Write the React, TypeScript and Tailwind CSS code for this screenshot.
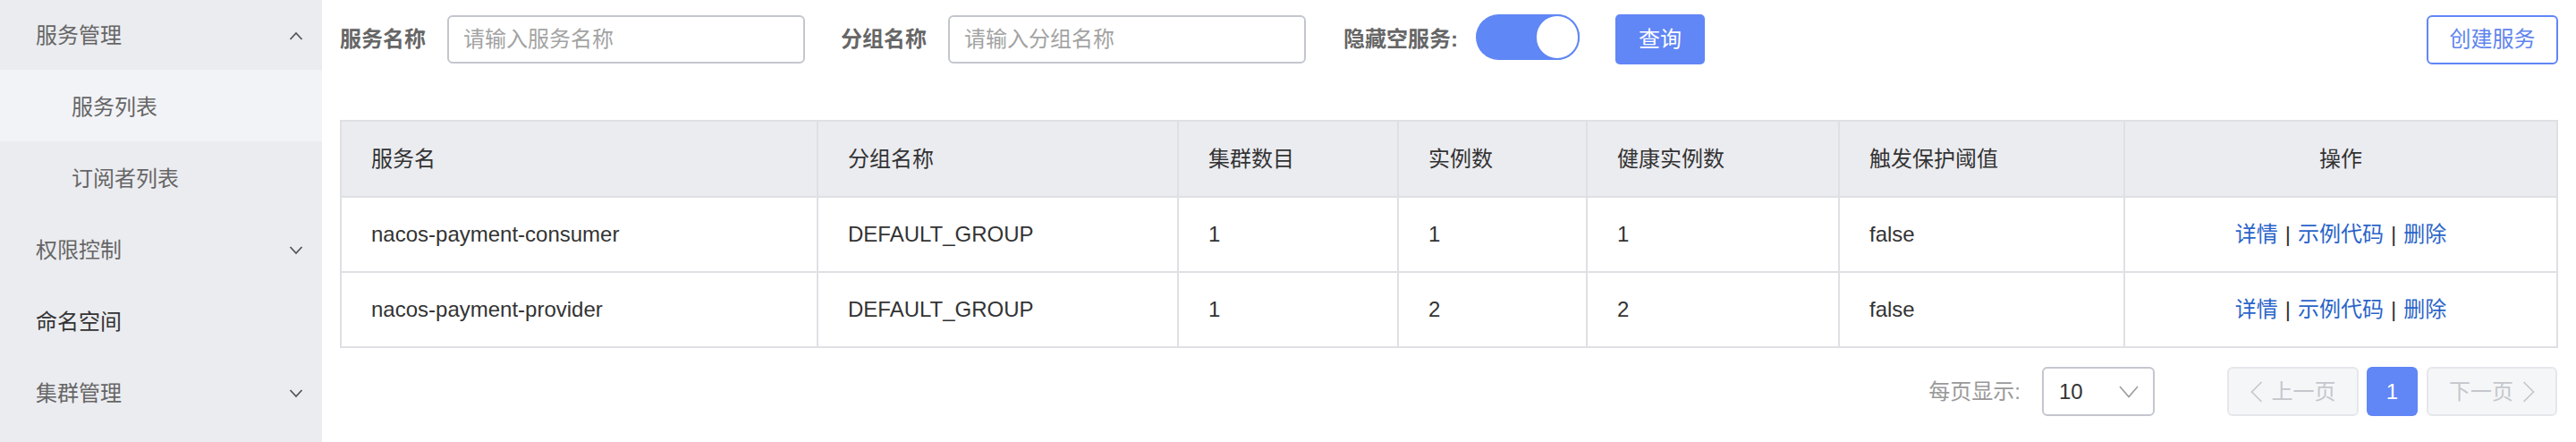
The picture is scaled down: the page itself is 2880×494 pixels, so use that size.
import React from 'react';

const font = { fontFamily: '"Liberation Sans", "Noto Sans CJK SC", sans-serif' };

const menu = [
  { title: '服务管理', level: 0, arrow: 'up' },
  { title: '服务列表', level: 1, active: true },
  { title: '订阅者列表', level: 1 },
  { title: '权限控制', level: 0, arrow: 'down' },
  { title: '命名空间', level: 0, dark: true },
  { title: '集群管理', level: 0, arrow: 'down' },
];

const rows = [
  { name: 'nacos-payment-consumer', group: 'DEFAULT_GROUP', clusters: 1, instances: 1, healthy: 1, threshold: 'false' },
  { name: 'nacos-payment-provider', group: 'DEFAULT_GROUP', clusters: 1, instances: 2, healthy: 2, threshold: 'false' },
];

const cols = ['服务名', '分组名称', '集群数目', '实例数', '健康实例数', '触发保护阈值'];
const colWidths = [533, 403, 246, 211, 282, 319];

function Chevron({ dir }: { dir: 'up' | 'down' }) {
  return (
    <svg width="16" height="10" viewBox="0 0 16 10" fill="none">
      <path
        d={dir === 'up' ? 'M1.5 9 L8 2 L14.5 9' : 'M1.5 1 L8 8 L14.5 1'}
        stroke="#555"
        strokeWidth="1.8"
      />
    </svg>
  );
}

export default function App() {
  return (
    <div className="flex w-[2880px] h-[494px] bg-white overflow-hidden" style={font}>
      {/* Sidebar */}
      <div className="w-[360px] shrink-0 bg-[#ebecf0]">
        {menu.map((item, i) => (
          <div
            key={i}
            className={`flex items-center justify-between pr-[20px] text-[24px] ${
              i === 0 ? 'h-[78px] pt-[2px]' : 'h-[80px] pt-[4px]'
            } ${item.level === 1 ? 'pl-[80px]' : 'pl-[40px]'} ${
              item.active ? 'bg-[#f2f3f7]' : ''
            } ${item.dark ? 'text-[#333]' : 'text-[#666]'}`}
          >
            <span>{item.title}</span>
            {item.arrow && (
              <span className="mr-[1px] flex items-center">
                <Chevron dir={item.arrow as 'up' | 'down'} />
              </span>
            )}
          </div>
        ))}
      </div>

      {/* Main */}
      <div className="flex-1 px-[20px] pt-[16px]">
        {/* Filters */}
        <div className="flex items-center h-[56px]">
          <label className="w-[96px] text-[24px] font-bold text-[#666]">服务名称</label>
          <div className="ml-[24px] w-[400px] h-[54px] border-2 border-[#c4c6cf] rounded-[6px] flex items-center pl-[16px] text-[24px] text-[#a3a3a3]">
            请输入服务名称
          </div>
          <label className="ml-[40px] w-[96px] text-[24px] font-bold text-[#666]">分组名称</label>
          <div className="ml-[24px] w-[400px] h-[54px] border-2 border-[#c4c6cf] rounded-[6px] flex items-center pl-[16px] text-[24px] text-[#a3a3a3]">
            请输入分组名称
          </div>
          <label className="ml-[42px] w-[126px] text-[24px] font-bold text-[#666] whitespace-nowrap">隐藏空服务:</label>
          <div className="ml-[22px] self-start w-[116px] h-[51px] rounded-full bg-[#5f87f5] flex items-center justify-end">
            <div className="w-[50px] h-[51px] rounded-full bg-white border-2 border-[#5f87f5]" />
          </div>
          <button className="ml-[40px] w-[100px] h-[56px] rounded-[5px] bg-[#6186f5] text-white text-[24px]">
            查询
          </button>
          <button className="ml-auto w-[147px] h-[55px] rounded-[6px] border-2 border-[#6186f5] text-[#5f84ee] text-[24px] bg-white">
            创建服务
          </button>
        </div>

        {/* Table */}
        <table className="mt-[62px] w-[2480px] table-fixed border-collapse border-2 border-[#dfe0e4] text-[24px] text-[#333]">
          <colgroup>
            {colWidths.map((w, i) => (
              <col key={i} style={{ width: w }} />
            ))}
            <col />
          </colgroup>
          <thead>
            <tr className="h-[85px] bg-[#ebecf0]">
              {cols.map((c) => (
                <th key={c} className="border-2 border-[#dfe0e4] pl-[33px] text-left font-normal">
                  {c}
                </th>
              ))}
              <th className="border-2 border-[#dfe0e4] text-center font-normal">操作</th>
            </tr>
          </thead>
          <tbody>
            {rows.map((r) => (
              <tr key={r.name} className="h-[84px]">
                <td className="border-2 border-[#dfe0e4] pl-[33px]">{r.name}</td>
                <td className="border-2 border-[#dfe0e4] pl-[33px]">{r.group}</td>
                <td className="border-2 border-[#dfe0e4] pl-[33px]">{r.clusters}</td>
                <td className="border-2 border-[#dfe0e4] pl-[33px]">{r.instances}</td>
                <td className="border-2 border-[#dfe0e4] pl-[33px]">{r.healthy}</td>
                <td className="border-2 border-[#dfe0e4] pl-[33px]">{r.threshold}</td>
                <td className="border-2 border-[#dfe0e4] text-center">
                  <span className="text-[#2a64c9]">详情</span>
                  <span className="mx-[8px]">|</span>
                  <span className="text-[#2a64c9]">示例代码</span>
                  <span className="mx-[8px]">|</span>
                  <span className="text-[#2a64c9]">删除</span>
                </td>
              </tr>
            ))}
          </tbody>
        </table>

        {/* Pagination */}
        <div className="mt-[21px] flex items-center justify-end pr-[1px]">
          <span className="text-[24px] text-[#999]">每页显示:</span>
          <div className="ml-[24px] w-[126px] h-[55px] border-2 border-[#c4c6cf] rounded-[6px] flex items-center justify-between pl-[17px] pr-[16px]">
            <span className="text-[24px] text-[#333]">10</span>
            <svg width="22" height="14" viewBox="0 0 22 14" fill="none">
              <path d="M1 1 L11 12.5 L21 1" stroke="#999" strokeWidth="1.5" />
            </svg>
          </div>
          <button className="ml-[81px] w-[147px] h-[55px] rounded-[6px] border-2 border-[#e6e7eb] bg-[#f5f6f8] flex items-center justify-center gap-[10px] text-[24px] text-[#c5c6cb]">
            <svg width="14" height="24" viewBox="0 0 14 24" fill="none">
              <path d="M12.5 1 L1.5 12 L12.5 23" stroke="#c5c6cb" strokeWidth="1.6" />
            </svg>
            <span>上一页</span>
          </button>
          <button className="ml-[9px] w-[57px] h-[55px] rounded-[6px] bg-[#6186f5] text-white text-[24px]">
            1
          </button>
          <button className="ml-[10px] w-[146px] h-[55px] rounded-[6px] border-2 border-[#e6e7eb] bg-[#f5f6f8] flex items-center justify-center gap-[10px] text-[24px] text-[#c5c6cb]">
            <span>下一页</span>
            <svg width="14" height="24" viewBox="0 0 14 24" fill="none">
              <path d="M1.5 1 L12.5 12 L1.5 23" stroke="#c5c6cb" strokeWidth="1.6" />
            </svg>
          </button>
        </div>
      </div>
    </div>
  );
}
